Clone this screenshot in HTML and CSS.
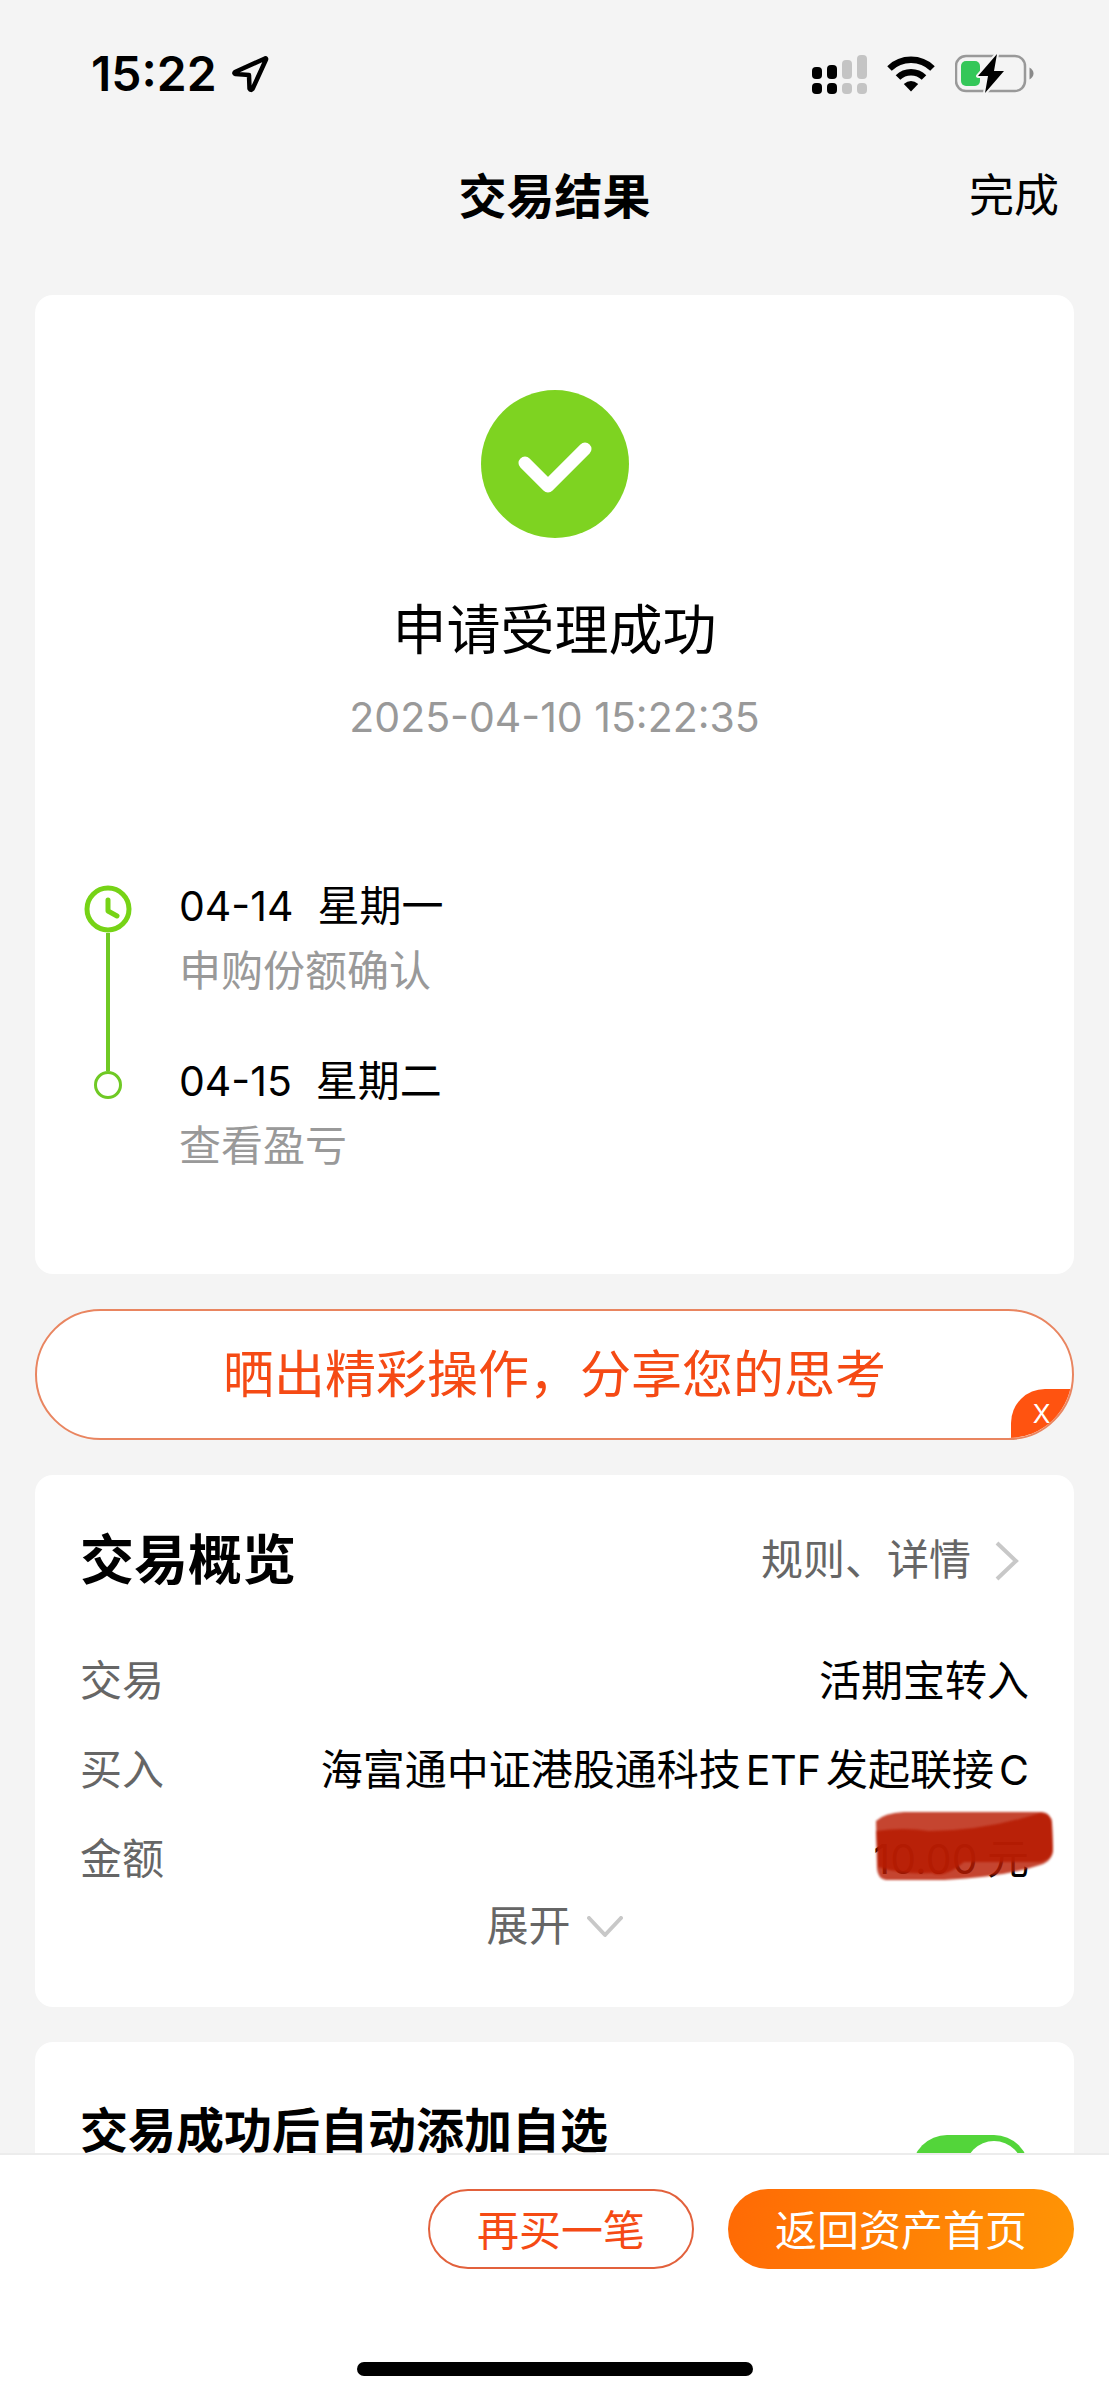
FILE: index.html
```
<!DOCTYPE html>
<html lang="zh-CN">
<head>
  <title>交易结果</title>
  <meta charset="UTF-8">
  <meta name="viewport" content="width=device-width, initial-scale=1">
  <link rel="stylesheet" href="styles.css">
</head>
<body>
<div class="status">
  <div class="status-time">
    <span>15:22</span>
    <svg width="38" height="38" viewBox="0 0 38 38">
      <path d="M34 3.500 L4 17 Q2.500 18.500 4.500 19 L18 20 L18.500 33.500 Q20 36 21.500 34 L35 4.500 Q35.500 3 34 3.500 Z" fill="none" stroke="#000" stroke-width="4.500" stroke-linejoin="round"/>
    </svg>
  </div>
  <div class="status-icons">
    <svg width="55" height="39" viewBox="0 0 55 39">
      <g fill="#000">
        <rect x="0" y="12" width="10" height="12" rx="4"/>
        <rect x="15" y="10" width="10" height="14" rx="4"/>
        <rect x="0" y="28" width="10" height="11" rx="4"/>
        <rect x="15" y="28" width="10" height="11" rx="4"/>
      </g>
      <g fill="#c4c4c4">
        <rect x="30" y="5" width="10" height="19" rx="4"/>
        <rect x="45" y="0" width="10" height="24" rx="4"/>
        <rect x="30" y="28" width="10" height="11" rx="4"/>
        <rect x="45" y="28" width="10" height="11" rx="4"/>
      </g>
    </svg>
    <svg width="48" height="36" viewBox="0 0 48 36">
      <g fill="none" stroke="#000" stroke-width="6.500">
        <path d="M2.500 12.500 A31 31 0 0 1 45.500 12.500"/>
        <path d="M11 21.500 A18.500 18.500 0 0 1 37 21.500"/>
      </g>
      <path d="M24 35.500 L16.800 28 Q24 22 31.200 28 Z"/>
    </svg>
    <svg width="79" height="40" viewBox="0 0 79 40">
      <rect x="1" y="2" width="69" height="35" rx="10" fill="none" stroke="#999" stroke-width="2.500"/>
      <path d="M74.500 13.500 Q78.500 16 78.500 19.500 Q78.500 23 74.500 25.500 Z" fill="#8a8a8a"/>
      <rect x="6" y="7" width="19" height="25" rx="5" fill="#34c759"/>
      <path d="M42 0 L23 22 H33 L30 39 L49 17 H39 Z" fill="#000" stroke="#f4f4f4" stroke-width="4" stroke-linejoin="round" paint-order="stroke"/>
    </svg>
  </div>
</div>

<header class="nav">
  <h1>交易结果</h1>
  <a href="#">完成</a>
</header>

<main class="page">
  <section class="card result">
    <svg class="result-icon" width="148" height="148" viewBox="0 0 148 148">
      <circle cx="74" cy="74" r="74" fill="#7ed321"/>
      <path d="M44 73 L67 96 L104 59" fill="none" stroke="#fff" stroke-width="13" stroke-linecap="round" stroke-linejoin="round"/>
    </svg>
    <h2>申请受理成功</h2>
    <time class="result-time">2025-04-10 15:22:35</time>

    <ol class="timeline">
      <li>
        <div class="marker">
          <svg class="clock" width="48" height="48" viewBox="0 0 48 48">
            <g fill="none" stroke="#76d316" stroke-linecap="round" stroke-linejoin="round">
              <circle cx="24" cy="24" r="21" stroke-width="5"/>
              <path d="M24 15 V26 L33 31" stroke-width="5"/>
            </g>
          </svg>
          <span class="line"></span>
        </div>
        <div>
          <p class="day"><span>04-14</span>星期一</p>
          <p class="note">申购份额确认</p>
        </div>
      </li>
      <li>
        <div class="marker">
          <span class="line line-end"></span>
          <span class="dot"></span>
        </div>
        <div>
          <p class="day"><span>04-15</span>星期二</p>
          <p class="note">查看盈亏</p>
        </div>
      </li>
    </ol>
  </section>

  <div class="share">
    <a href="#">晒出精彩操作，分享您的思考</a>
    <button class="share-close" type="button">X</button>
  </div>

  <section class="card overview">
    <div class="overview-head">
      <h2>交易概览</h2>
      <a href="#">规则、详情
        <svg width="24" height="40" viewBox="0 0 24 40"><path d="M2 2 L21 20 L2 38" fill="none" stroke="#c8c8c8" stroke-width="4"/></svg>
      </a>
    </div>
    <dl>
      <div class="row">
        <dt>交易</dt>
        <dd>活期宝转入</dd>
      </div>
      <div class="row">
        <dt>买入</dt>
        <dd class="fund">海富通中证港股通科技<span>ETF</span>发起联接<span>C</span></dd>
      </div>
      <div class="row">
        <dt>金额</dt>
        <dd class="amount">
          <span>10.00</span> 元
          <svg class="scribble" width="180" height="70" viewBox="0 0 180 70">
            <path d="M2 10 Q10 2 30 1 L168 1 Q177 2 178 12 L179 38 Q179 50 166 54 Q130 66 70 69 L12 69 Q4 68 3 58 Z" fill="#b81c02" fill-opacity=".82"/>
            <path d="M2 20 Q30 16 55 20 Q110 20 166 2 Q177 2 178 12 L179 38 Q179 48 166 51 L90 51 Q70 68 58 62 Q30 64 4 56 Z" fill="#b81c02" fill-opacity=".86"/>
          </svg>
        </dd>
      </div>
    </dl>
    <button class="expand" type="button">展开
      <svg width="36" height="22" viewBox="0 0 36 22"><path d="M2 2 L18 19 L34 2" fill="none" stroke="#c8c8c8" stroke-width="4" stroke-linecap="round" stroke-linejoin="round"/></svg>
    </button>
  </section>

  <section class="card favorite">
    <label for="auto-add">交易成功后自动添加自选</label>
    <input id="auto-add" class="switch" type="checkbox" checked>
  </section>
</main>

<footer class="actions">
  <div class="actions-buttons">
    <button class="btn" type="button">再买一笔</button>
    <button class="btn btn-primary" type="button">返回资产首页</button>
  </div>
  <div class="home-bar"></div>
</footer>
</body>
</html>
```
FILE: styles.css
```
* {
  box-sizing: border-box;
}

body {
  margin: 0;
  background: #f4f4f4;
  color: #000;
  font-family: "Noto Sans CJK SC", sans-serif;
  font-size: 42px;
}

h1,
h2,
p,
dl,
dd,
ol {
  margin: 0;
  padding: 0;
}

a {
  color: inherit;
  text-decoration: none;
}

button {
  padding: 0;
  border: 0;
  background: none;
  color: inherit;
  font: inherit;
}

svg {
  display: block;
}

.status {
  display: flex;
  justify-content: space-between;
  align-items: center;
  height: 148px;
  padding: 0 75px 0 91px;
}

.status-time {
  display: flex;
  align-items: center;
  gap: 14px;
  font: 600 48px/60px Inter, sans-serif;
}

.status-icons {
  display: flex;
  align-items: center;
  gap: 20px;
}

.nav {
  position: relative;
  height: 90px;
  line-height: 90px;
  text-align: center;
}

.nav h1 {
  font-size: 48px;
  font-weight: 700;
}

.nav a {
  position: absolute;
  top: 0;
  right: 50px;
  font-size: 45px;
}

.page {
  display: flex;
  flex-direction: column;
  gap: 35px;
  padding: 57px 35px 0;
}

.card {
  border-radius: 18px;
  background: #fff;
}

.result {
  padding: 95px 45px 99px;
  text-align: center;
}

.result-icon {
  margin: 0 auto 54px;
}

.result h2 {
  font-size: 54px;
  font-weight: 400;
  line-height: 70px;
}

.result-time {
  display: block;
  margin-top: 30px;
  color: #999;
  font: 41px/50px Inter, sans-serif;
}

.timeline {
  margin-top: 128px;
  list-style: none;
  text-align: left;
}

.timeline li {
  display: flex;
  gap: 43px;
  line-height: 65px;
}

.timeline li:first-child {
  height: 175px;
}

.marker {
  display: flex;
  flex-direction: column;
  align-items: center;
  width: 56px;
}

.clock {
  flex: none;
  margin-top: 15px;
}

.line {
  flex: 1;
  width: 4px;
  background: #6fc924;
}

.line-end {
  flex: none;
  height: 26px;
}

.dot {
  width: 28px;
  height: 28px;
  border: 3px solid #6fc924;
  border-radius: 50%;
}

.day span {
  margin-right: 24px;
  font: 41px/1 Inter, sans-serif;
}

.note {
  color: #999;
}

.share {
  position: relative;
  height: 131px;
  overflow: hidden;
  border: 2px solid #e98560;
  border-radius: 66px;
  background: #fff;
  color: #f54a14;
  font-size: 51px;
  line-height: 121px;
  text-align: center;
}

.share a {
  display: block;
}

.share-close {
  position: absolute;
  right: 0;
  bottom: 0;
  width: 61px;
  height: 49px;
  border-radius: 34px 0 0;
  background: #ff5310;
  color: #fff;
  font: 26px/49px Inter, sans-serif;
}

.overview {
  padding: 47px 45px 61px;
}

.overview-head {
  display: flex;
  justify-content: space-between;
  align-items: center;
  margin-bottom: 41px;
  line-height: 70px;
}

.overview h2 {
  font-size: 54px;
  font-weight: 700;
}

.overview-head a {
  display: flex;
  align-items: center;
  gap: 24px;
  padding-right: 10px;
  color: #666;
}

.overview-head svg {
  margin-top: 8px;
}

.row {
  display: flex;
  justify-content: space-between;
  line-height: 89px;
}

.row dt {
  color: #666;
}

.row span {
  font: 41px/1 Inter, sans-serif;
}

.fund span {
  margin-left: 5px;
}

.fund span:first-child {
  margin-right: 5px;
}

.amount {
  position: relative;
}

/* red marker over the amount */
.scribble {
  position: absolute;
  top: 0;
  right: -25px;
  filter: blur(1px);
}

.expand {
  display: flex;
  align-items: center;
  gap: 16px;
  margin: 0 auto;
  color: #666;
  line-height: 46px;
}

.expand svg {
  margin-top: 8px;
}

.favorite {
  display: flex;
  justify-content: space-between;
  padding: 50px 45px;
  font-size: 48px;
  font-weight: 700;
  line-height: 70px;
}

.switch {
  appearance: none;
  width: 117px;
  height: 70px;
  margin: 43px 0 0;
  border-radius: 35px;
  background: #53d53a;
}

.switch::before {
  content: "";
  display: block;
  width: 58px;
  height: 58px;
  margin: 6px 6px 6px auto;
  border-radius: 50%;
  background: #fff;
}

.actions {
  position: fixed;
  right: 0;
  bottom: 0;
  left: 0;
  padding: 34px 35px 24px;
  border-top: 2px solid #ececec;
  background: #fff;
}

.actions-buttons {
  display: flex;
  justify-content: flex-end;
  gap: 34px;
}

.btn {
  height: 80px;
  padding: 0 47px 4px;
  border: 2px solid #e2613c;
  border-radius: 40px;
  color: #f54a14;
}

.btn-primary {
  border: 0;
  background: linear-gradient(100deg, #ff6a05, #ff9505);
  color: #fff;
}

.home-bar {
  width: 396px;
  height: 14px;
  margin: 93px auto 0;
  border-radius: 7px;
  background: #000;
}
```
